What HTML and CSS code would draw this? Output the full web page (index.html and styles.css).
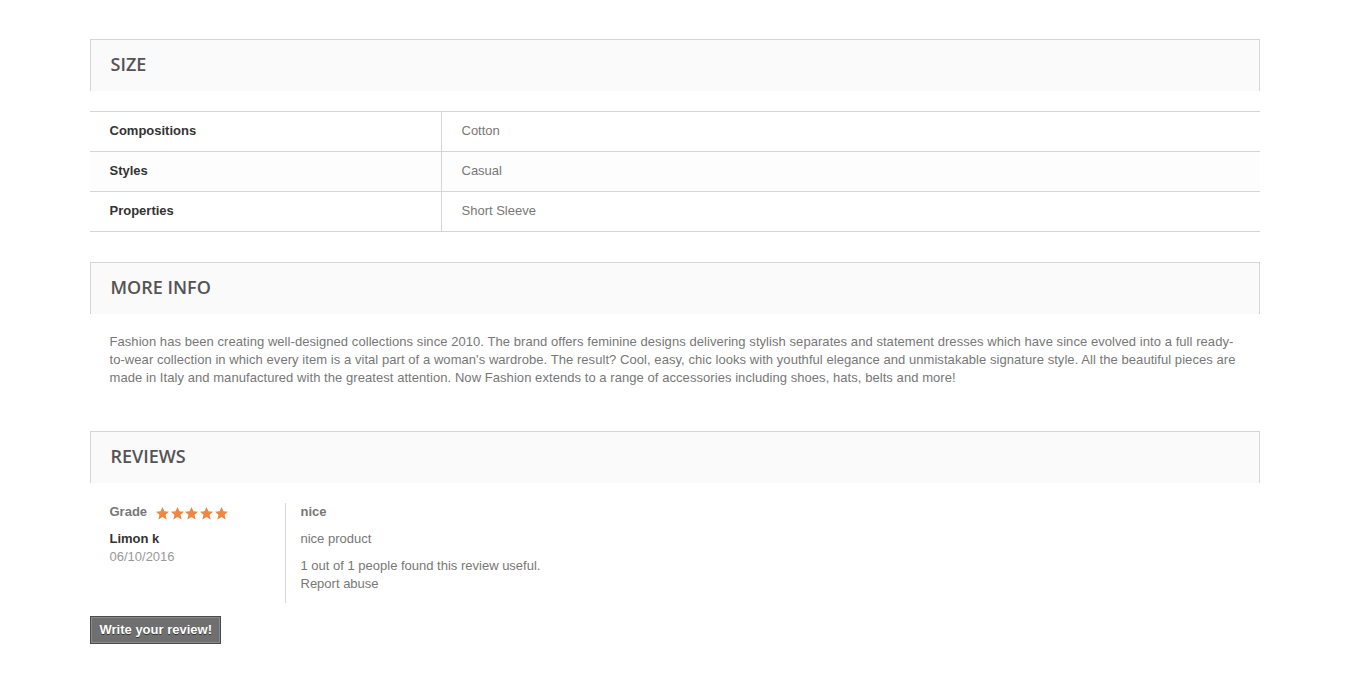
FILE: index.html
```html
<!DOCTYPE html>
<html lang="en">
<head>
  <meta charset="UTF-8">
  <title>Product details</title>
  <link rel="stylesheet" href="styles.css">
</head>
<body>
  <div class="container">
    <h3 class="block-head">Size</h3>
    <table class="data-sheet">
      <tr class="odd"><td class="name">Compositions</td><td class="value">Cotton</td></tr>
      <tr class="even"><td class="name">Styles</td><td class="value">Casual</td></tr>
      <tr class="odd"><td class="name">Properties</td><td class="value">Short Sleeve</td></tr>
    </table>

    <h3 class="block-head">More info</h3>
    <div class="rte">
      <p>Fashion has been creating well-designed collections since 2010. The brand offers feminine designs delivering stylish separates and statement dresses which have since evolved into a full ready-to-wear collection in which every item is a vital part of a woman's wardrobe. The result? Cool, easy, chic looks with youthful elegance and unmistakable signature style. All the beautiful pieces are made in Italy and manufactured with the greatest attention. Now Fashion extends to a range of accessories including shoes, hats, belts and more!</p>
    </div>

    <h3 class="block-head">Reviews</h3>
    <div class="reviews">
      <div class="comment">
        <div class="comment-author">
          <div class="grade">
            <span>Grade</span>
            <span class="stars">
              <svg viewBox="0 0 24 24"><path d="M12 1.5l3.1 7 7.4.6-5.6 4.9 1.7 7.4L12 17.5l-6.6 3.9 1.7-7.4-5.6-4.9 7.4-.6z"/></svg>
              <svg viewBox="0 0 24 24"><path d="M12 1.5l3.1 7 7.4.6-5.6 4.9 1.7 7.4L12 17.5l-6.6 3.9 1.7-7.4-5.6-4.9 7.4-.6z"/></svg>
              <svg viewBox="0 0 24 24"><path d="M12 1.5l3.1 7 7.4.6-5.6 4.9 1.7 7.4L12 17.5l-6.6 3.9 1.7-7.4-5.6-4.9 7.4-.6z"/></svg>
              <svg viewBox="0 0 24 24"><path d="M12 1.5l3.1 7 7.4.6-5.6 4.9 1.7 7.4L12 17.5l-6.6 3.9 1.7-7.4-5.6-4.9 7.4-.6z"/></svg>
              <svg viewBox="0 0 24 24"><path d="M12 1.5l3.1 7 7.4.6-5.6 4.9 1.7 7.4L12 17.5l-6.6 3.9 1.7-7.4-5.6-4.9 7.4-.6z"/></svg>
            </span>
          </div>
          <div class="author-name">Limon k</div>
          <div class="comment-date">06/10/2016</div>
        </div>
        <div class="comment-details">
          <h4 class="title">nice</h4>
          <p class="comment-text">nice product</p>
          <ul class="usefulness">
            <li>1 out of 1 people found this review useful.</li>
            <li>Report abuse</li>
          </ul>
        </div>
      </div>
      <a class="btn-review" href="#">Write your review!</a>
    </div>
  </div>
</body>
</html>
```

FILE: styles.css
```css
body {
  margin: 0;
  background: #fff;
  font-family: Arial, "Liberation Sans", sans-serif;
  font-size: 13px;
  line-height: 18px;
  color: #777;
}
.container {
  width: 1170px;
  margin: 39px auto 0;
}
.block-head {
  margin: 0;
  height: 51px;
  padding: 0 20px;
  border: 1px solid #d6d4d4;
  border-bottom: none;
  background: #fafafa;
  font-family: "Open Sans", sans-serif;
  font-size: 18px;
  font-weight: 600;
  line-height: 48px;
  text-transform: uppercase;
  color: #555454;
}
.data-sheet {
  width: 100%;
  margin: 20px 0 30px;
  border-collapse: collapse;
  border-top: 1px solid #d6d4d4;
}
.data-sheet td {
  height: 38px;
  padding: 0 20px 1px;
  border-bottom: 1px solid #d6d4d4;
}
.data-sheet tr.even {
  background: #fdfdfd;
}
.data-sheet td.name {
  width: 311px;
  border-right: 1px solid #d6d4d4;
  font-weight: bold;
  color: #333;
}
.rte {
  padding: 19px 20px 0;
  margin-bottom: 44px;
}
.rte p {
  margin: 0;
  letter-spacing: 0.06px;
}
.reviews {
  padding-top: 20px;
}
.comment {
  display: flex;
  margin-bottom: 13px;
}
.comment-author {
  width: 175px;
  padding-left: 20px;
  border-right: 1px solid #d6d4d4;
}
.grade {
  display: flex;
  align-items: center;
  font-weight: bold;
  margin-bottom: 9px;
}
.stars {
  display: flex;
  margin-left: 8px;
  margin-top: 2px;
}
.stars svg {
  width: 15px;
  height: 15px;
  margin-right: -0.3px;
  fill: #ef8743;
}
.author-name {
  font-weight: bold;
  color: #333;
}
.comment-date {
  color: #999;
}
.comment-details {
  padding-left: 15px;
  padding-bottom: 10px;
}
.comment-details .title {
  margin: 0 0 9px;
  font-size: 13px;
  font-weight: bold;
  color: #777;
}
.comment-text {
  margin: 0 0 9px;
}
.usefulness {
  list-style: none;
  margin: 0;
  padding: 0;
}
.btn-review {
  display: inline-block;
  padding: 4px 8px 4px 9px;
  background: #6f6f6f;
  border: 1px solid #4a4a4a;
  box-shadow: inset 0 0 0 1px #8a8a8a;
  color: #fff;
  font-weight: bold;
  text-decoration: none;
  text-shadow: 0 1px 0 #333;
}
```
